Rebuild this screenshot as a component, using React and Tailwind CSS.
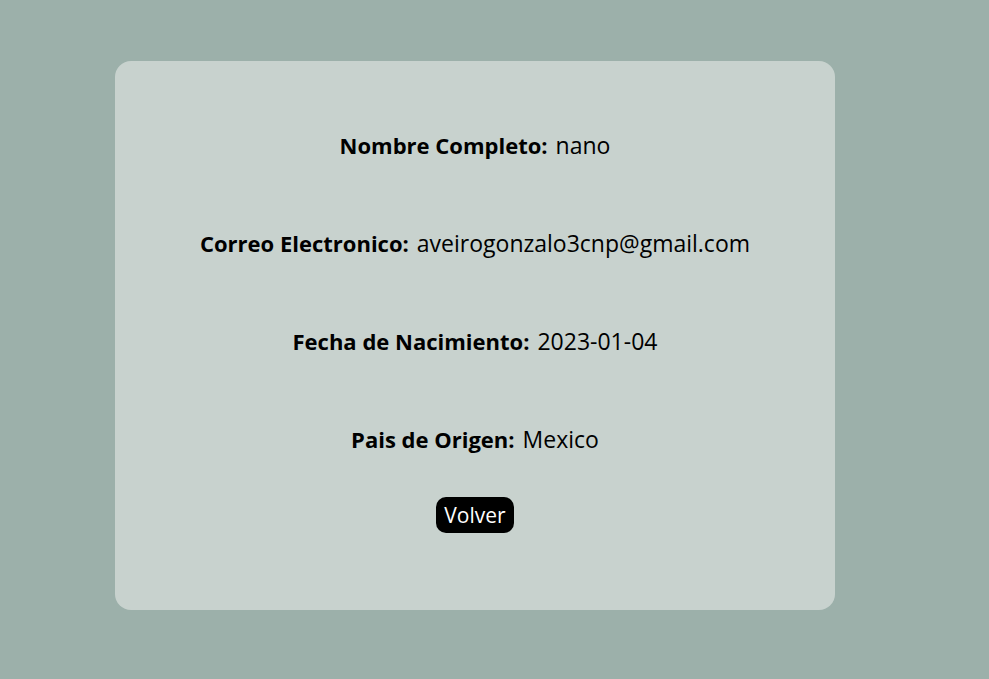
const fields = [
  { label: "Nombre Completo", value: "nano" },
  { label: "Correo Electronico", value: "aveirogonzalo3cnp@gmail.com" },
  { label: "Fecha de Nacimiento", value: "2023-01-04" },
  { label: "Pais de Origen", value: "Mexico" },
];

export default function App() {
  return (
    <div className="min-h-screen bg-[#9cb0aa] pt-[61px] pr-[154px] pb-[69px] pl-[115px] font-['Open_Sans','Noto_Sans',sans-serif] text-black">
      <main className="flex flex-col items-center rounded-2xl bg-[#c8d2ce] px-8 pt-[66px] pb-[77px] text-center">
        <dl className="flex flex-col gap-[62px] leading-9">
          {fields.map(({ label, value }) => (
            <div key={label} className="flex min-h-9 flex-wrap items-baseline justify-center gap-x-2">
              <dt className="text-[22px] font-bold">{label}:</dt>
              <dd className="text-[23px]">{value}</dd>
            </div>
          ))}
        </dl>
        <button
          type="button"
          className="mt-10 rounded-[10px] bg-black px-2 text-[21px] leading-9 text-white"
        >
          Volver
        </button>
      </main>
    </div>
  );
}
